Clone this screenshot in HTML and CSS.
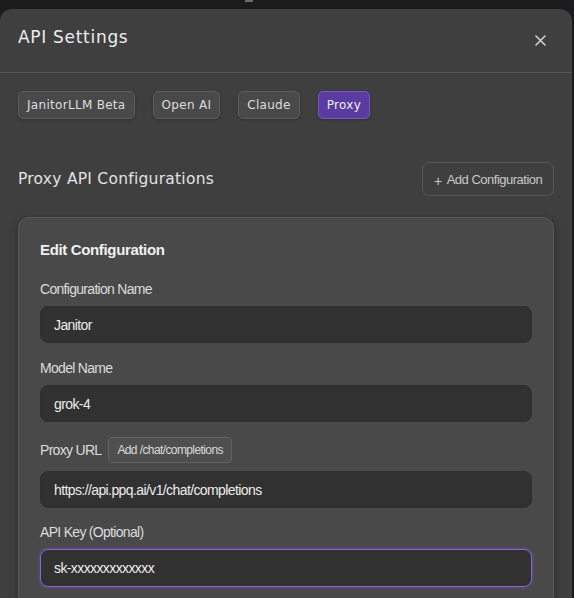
FILE: index.html
```html
<!DOCTYPE html>
<html>
<head>
<meta charset="utf-8">
<link rel="stylesheet" href="styles.css">
</head>
<body>
<div class="topmark"></div>
<div class="modal">
  <div class="header">
    <h1 class="title">API Settings</h1>
    <button class="close" aria-label="Close">
      <svg width="11" height="11" viewBox="0 0 11 11"><path d="M1 1L10 10M10 1L1 10" stroke="#d0d0d0" stroke-width="1.6" stroke-linecap="round"/></svg>
    </button>
  </div>
  <div class="body">
    <div class="tabs">
      <button class="tab">JanitorLLM Beta</button>
      <button class="tab">Open AI</button>
      <button class="tab">Claude</button>
      <button class="tab active">Proxy</button>
    </div>
    <div class="section-head">
      <h2 class="section-title">Proxy API Configurations</h2>
      <button class="add-btn"><span class="plus">+</span> Add Configuration</button>
    </div>
    <div class="card">
      <h3 class="card-title">Edit Configuration</h3>
      <div class="field">
        <label class="label">Configuration Name</label>
        <div class="input">Janitor</div>
      </div>
      <div class="field">
        <label class="label">Model Name</label>
        <div class="input">grok-4</div>
      </div>
      <div class="field">
        <div class="label-row">
          <label class="label inline">Proxy URL</label>
          <button class="small-btn">Add /chat/completions</button>
        </div>
        <div class="input">https://api.ppq.ai/v1/chat/completions</div>
      </div>
      <div class="field">
        <label class="label">API Key (Optional)</label>
        <div class="input focused">sk-xxxxxxxxxxxxx</div>
      </div>
    </div>
  </div>
</div>
</body>
</html>
```
FILE: styles.css
```css
html, body {
  margin: 0;
  padding: 0;
  background: #1b1b1d;
  height: 100%;
  overflow: hidden;
}
body {
  font-family: "Liberation Sans", Arial, sans-serif;
  color: #e6e6e6;
  position: relative;
}
.topmark {
  position: absolute;
  left: 245px;
  top: 0;
  width: 8px;
  height: 2px;
  background: #6a6a6a;
}
.modal {
  margin-top: 9px;
  width: 572px;
  height: 620px;
  background: #3f3f3f;
  border-radius: 12px 12px 0 0;
  box-sizing: border-box;
}
.header {
  height: 63px;
  display: flex;
  justify-content: space-between;
  align-items: flex-start;
  padding: 0 18px;
  border-bottom: 1px solid #565656;
}
.title {
  margin: 17px 0 0;
  font-family: "DejaVu Sans", sans-serif;
  font-weight: 400;
  font-size: 17px;
  line-height: 22px;
  letter-spacing: 0.7px;
  color: #ececec;
}
.close {
  margin-top: 26px;
  margin-right: 8px;
  background: none;
  border: 0;
  padding: 0;
  width: 11px;
  height: 11px;
  display: flex;
}
.body {
  padding: 18px 18px 0;
}
.tabs {
  display: flex;
  gap: 18px;
}
.tab {
  height: 28px;
  padding: 0 8px;
  background: #494949;
  border: 1px solid #5c5c5c;
  border-radius: 5px;
  color: #dedede;
  font-family: "DejaVu Sans", sans-serif;
  font-size: 12px;
  letter-spacing: 0.3px;
  box-shadow: 0 1px 3px rgba(0,0,0,0.25);
}
.tab.active {
  background: #5a3ca0;
  border-color: #7a56cf;
  color: #eee;
}
.section-head {
  margin-top: 43px;
  display: flex;
  justify-content: space-between;
  align-items: center;
}
.section-title {
  margin: 0;
  font-family: "DejaVu Sans", sans-serif;
  font-weight: 400;
  font-size: 15.5px;
  letter-spacing: 0.25px;
  color: #e2e2e2;
}
.add-btn {
  height: 34px;
  width: 132px;
  background: transparent;
  border: 1px solid #575757;
  border-radius: 7px;
  color: #c8c8c8;
  font-family: "Liberation Sans", Arial, sans-serif;
  font-size: 13px;
  letter-spacing: -0.5px;
  padding: 0 11px;
  display: flex;
  align-items: center;
  gap: 5px;
  white-space: nowrap;
}
.plus {
  font-size: 14px;
  font-weight: 300;
  margin-top: 3px;
}
.card {
  margin-top: 21px;
  background: #494949;
  border: 1px solid #595959;
  border-radius: 11px;
  padding: 22px 21px 20px;
  box-shadow: 0 2px 8px rgba(0,0,0,0.3);
}
.card-title {
  margin: 0 0 21px;
  font-size: 15px;
  line-height: 20px;
  font-weight: 700;
  letter-spacing: -0.35px;
  color: #f0f0f0;
}
.field {
  margin-bottom: 17px;
}
.label {
  display: block;
  font-size: 14px;
  line-height: 16px;
  letter-spacing: -0.7px;
  color: #dcdcdc;
  margin-bottom: 9px;
}
.label.inline {
  margin-bottom: 0;
}
.label-row {
  display: flex;
  align-items: center;
  gap: 7px;
  margin-top: -2px;
  margin-bottom: 8px;
}
.small-btn {
  height: 26px;
  padding: 0 8px;
  background: #4f4f4f;
  border: 1px solid #626262;
  border-radius: 4px;
  color: #dadada;
  font-family: "Liberation Sans", Arial, sans-serif;
  font-size: 12px;
  letter-spacing: -0.6px;
}
.input {
  height: 37px;
  box-sizing: border-box;
  background: #313131;
  border: 1px solid #2e2e2e;
  border-radius: 8px;
  padding: 0 13px;
  display: flex;
  align-items: center;
  font-size: 14px;
  letter-spacing: -0.6px;
  color: #ececec;
}
.input.focused {
  height: 38px;
  border: 1px solid #8b64d6;
  box-shadow: 0 0 0 2px rgba(120, 80, 200, 0.25);
}
.field:nth-child(4) {
  margin-bottom: 16px;
}
```
